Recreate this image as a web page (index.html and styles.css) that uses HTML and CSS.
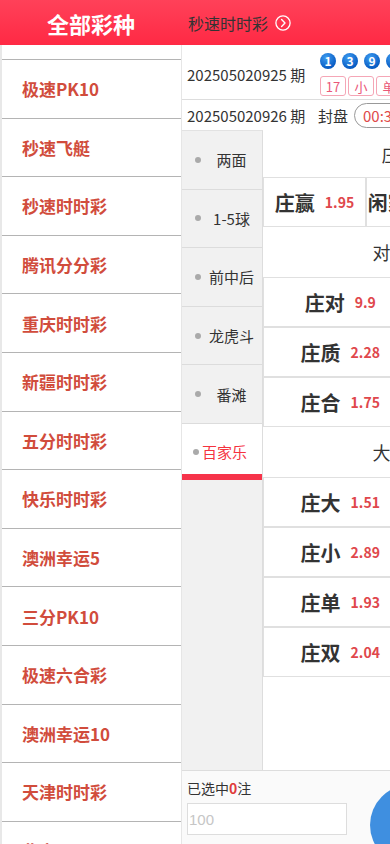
FILE: index.html
```html
<!DOCTYPE html>
<html lang="zh-CN">
<head>
<meta charset="utf-8">
<meta name="viewport" content="width=device-width, initial-scale=1">
<title>秒速时时彩</title>
<link rel="stylesheet" href="styles.css">
</head>
<body>
<div class="app">
  <aside class="drawer">
    <div class="drawer-head">全部彩种</div>
    <ul class="lot-list">
      <li class="lot lot-partial"></li>
      <li class="lot">极速PK10</li>
      <li class="lot">秒速飞艇</li>
      <li class="lot">秒速时时彩</li>
      <li class="lot">腾讯分分彩</li>
      <li class="lot">重庆时时彩</li>
      <li class="lot">新疆时时彩</li>
      <li class="lot">五分时时彩</li>
      <li class="lot">快乐时时彩</li>
      <li class="lot">澳洲幸运5</li>
      <li class="lot">三分PK10</li>
      <li class="lot">极速六合彩</li>
      <li class="lot">澳洲幸运10</li>
      <li class="lot">天津时时彩</li>
      <li class="lot">北京PK10</li>
    </ul>
  </aside>

  <main class="page">
    <header class="page-head">
      <span class="page-title">秒速时时彩</span>
      <svg class="head-icon" width="16" height="16" viewBox="0 0 16 16" aria-hidden="true">
        <circle cx="8" cy="8" r="7.1" fill="none" stroke="#fff" stroke-width="1.3"/>
        <path d="M6.6 4.6 L10 8 L6.6 11.4" fill="none" stroke="#fff" stroke-width="1.4" stroke-linecap="round" stroke-linejoin="round"/>
      </svg>
    </header>

    <div class="draw-row">
      <span class="period">202505020925 期</span>
      <div class="result">
        <div class="balls">
          <span class="ball">1</span>
          <span class="ball">3</span>
          <span class="ball">9</span>
          <span class="ball">0</span>
          <span class="ball">4</span>
        </div>
        <div class="tags">
          <span class="tag">17</span>
          <span class="tag">小</span>
          <span class="tag">单</span>
          <span class="tag">龙</span>
        </div>
      </div>
    </div>

    <div class="next-row">
      <span class="period">202505020926 期</span>
      <span class="seal">封盘</span>
      <span class="timer">00:35:12</span>
    </div>

    <div class="play">
      <nav class="tabs">
        <div class="tab"><span class="dot"></span><span class="tab-label">两面</span></div>
        <div class="tab"><span class="dot"></span><span class="tab-label">1-5球</span></div>
        <div class="tab"><span class="dot"></span><span class="tab-label">前中后</span></div>
        <div class="tab"><span class="dot"></span><span class="tab-label">龙虎斗</span></div>
        <div class="tab"><span class="dot"></span><span class="tab-label">番滩</span></div>
        <div class="tab tab-active"><span class="dot"></span><span class="tab-label">百家乐</span></div>
      </nav>

      <section class="board">
        <div class="group-title group-title-first">庄闲和局</div>
        <div class="grid-3">
          <div class="cell"><span class="cell-name">庄赢</span><span class="cell-odds">1.95</span></div>
          <div class="cell"><span class="cell-name">闲家赢</span><span class="cell-odds">1.95</span></div>
          <div class="cell"><span class="cell-name">和局</span><span class="cell-odds">8.00</span></div>
        </div>

        <div class="group-title">对子与质合</div>
        <div class="grid-2">
          <div class="cell"><span class="cell-name">庄对</span><span class="cell-odds">9.9</span></div>
          <div class="cell"><span class="cell-name">闲对</span><span class="cell-odds">9.9</span></div>
          <div class="cell"><span class="cell-name">庄质</span><span class="cell-odds">2.28</span></div>
          <div class="cell"><span class="cell-name">闲质</span><span class="cell-odds">2.28</span></div>
          <div class="cell"><span class="cell-name">庄合</span><span class="cell-odds">1.75</span></div>
          <div class="cell"><span class="cell-name">闲合</span><span class="cell-odds">1.75</span></div>
        </div>

        <div class="group-title">大小与单双</div>
        <div class="grid-2">
          <div class="cell"><span class="cell-name">庄大</span><span class="cell-odds">1.51</span></div>
          <div class="cell"><span class="cell-name">闲大</span><span class="cell-odds">1.51</span></div>
          <div class="cell"><span class="cell-name">庄小</span><span class="cell-odds">2.89</span></div>
          <div class="cell"><span class="cell-name">闲小</span><span class="cell-odds">2.89</span></div>
          <div class="cell"><span class="cell-name">庄单</span><span class="cell-odds">1.93</span></div>
          <div class="cell"><span class="cell-name">闲单</span><span class="cell-odds">1.93</span></div>
          <div class="cell"><span class="cell-name">庄双</span><span class="cell-odds">2.04</span></div>
          <div class="cell"><span class="cell-name">闲双</span><span class="cell-odds">2.04</span></div>
        </div>
      </section>
    </div>

    <footer class="betbar">
      <div class="bet-left">
        <div class="bet-count">已选中<b>0</b>注</div>
        <input class="bet-input" type="text" placeholder="100">
      </div>
      <button class="bet-btn" type="button">投注</button>
    </footer>
  </main>
</div>
</body>
</html>
```

FILE: styles.css
```css
* {
  box-sizing: border-box;
  margin: 0;
  padding: 0;
}

html, body {
  width: 390px;
  height: 844px;
  overflow: hidden;
  background: #fff;
}

body {
  font-family: "Noto Sans CJK SC", "Noto Sans", sans-serif;
  color: #333;
}

.app {
  display: flex;
  width: 390px;
  height: 844px;
  overflow: hidden;
}

/* ---------- drawer ---------- */
.drawer {
  flex: 0 0 182px;
  display: flex;
  flex-direction: column;
  background: #fff;
}

.drawer-head {
  flex: none;
  height: 45px;
  background: linear-gradient(180deg, #ff4159, #ff2944);
  color: #fff;
  font-size: 22px;
  font-weight: 700;
  display: flex;
  align-items: center;
  justify-content: center;
}

.lot-list {
  list-style: none;
  flex: 1;
  overflow: hidden;
  border-left: 2px solid #e8e8e8;
  border-right: 1px solid #e6e6e6;
}

.lot {
  height: 58.6px;
  border-bottom: 1px solid #b4b4b4;
  display: flex;
  align-items: center;
  padding-left: 20px;
  font-size: 17px;
  font-weight: 700;
  color: #d14c3c;
  white-space: nowrap;
}

.lot-partial {
  height: 15px;
}

/* ---------- page ---------- */
.page {
  flex: 0 0 390px;
  height: 844px;
  display: flex;
  flex-direction: column;
}

.page-head {
  flex: none;
  height: 45px;
  background: linear-gradient(180deg, #ff4159, #ff2944);
  display: flex;
  align-items: center;
  padding-left: 6px;
  gap: 7px;
}

.page-title {
  font-size: 16px;
  color: #333;
}

.head-icon {
  display: block;
}

.draw-row {
  flex: none;
  height: 55px;
  padding-top: 5px;
  padding-left: 5px;
  border-bottom: 1px solid #ddd;
  display: flex;
  align-items: center;
}

.period {
  flex: none;
  width: 131px;
  font-size: 15px;
  color: #333;
  white-space: nowrap;
}

.result {
  margin-left: 2px;
  display: flex;
  flex-direction: column;
  gap: 7px;
}

.balls {
  display: flex;
  gap: 6px;
}

.ball {
  width: 16px;
  height: 16px;
  border-radius: 50%;
  background: radial-gradient(circle at 40% 30%, #3e9df2, #0558c0 75%);
  color: #fff;
  font-size: 12px;
  font-weight: 700;
  line-height: 1;
  display: flex;
  align-items: center;
  justify-content: center;
}

.tags {
  display: flex;
  gap: 2px;
}

.tag {
  width: 26px;
  height: 20px;
  border: 1px solid #f5a6b6;
  border-radius: 3px;
  color: #ea5878;
  font-size: 13px;
  display: flex;
  align-items: center;
  justify-content: center;
}

.next-row {
  flex: none;
  height: 30px;
  padding-left: 5px;
  display: flex;
  align-items: center;
}

.seal {
  font-size: 15px;
  color: #333;
}

.timer {
  margin-left: 6px;
  height: 25px;
  padding: 0 8px;
  border: 1px solid #999;
  border-radius: 13px;
  color: #e04a4a;
  font-size: 15px;
  display: flex;
  align-items: center;
  white-space: nowrap;
}

/* ---------- play area ---------- */
.play {
  flex: 1;
  min-height: 0;
  display: flex;
}

.tabs {
  flex: none;
  width: 81px;
  background: #f1f1f1;
  border-right: 1px solid #ddd;
  border-top: 1px solid #e2e2e2;
}

.tab {
  height: 58.6px;
  border-bottom: 1px solid #dcdcdc;
  padding-left: 13px;
  display: flex;
  align-items: center;
  font-size: 15px;
  color: #333;
}

.dot {
  flex: none;
  width: 6px;
  height: 6px;
  border-radius: 50%;
  background: #aaa;
}

.tab-label {
  flex: 1;
  text-align: center;
  white-space: nowrap;
}

.tab-active {
  height: 56px;
  background: #fff;
  color: #f5333f;
  border-bottom: none;
  padding-left: 11px;
  box-shadow: inset 0 -6px 0 #f6334a;
}

.tab-active .tab-label {
  text-align: left;
  padding-left: 3px;
}

.board {
  flex: 1;
  min-width: 0;
  overflow: hidden;
  background: #fff;
}

.group-title {
  height: 50px;
  display: flex;
  align-items: center;
  justify-content: center;
  font-size: 18px;
  color: #333;
  white-space: nowrap;
}

.group-title-first {
  height: 47px;
}

.grid-3 {
  display: grid;
  grid-template-columns: repeat(3, 1fr);
}

.grid-2 {
  display: grid;
  grid-template-columns: repeat(2, 1fr);
}

.cell {
  height: 50px;
  border: 1px solid #e0e0e0;
  display: flex;
  align-items: center;
  justify-content: center;
  gap: 10px;
  white-space: nowrap;
}

.cell-name {
  font-size: 20px;
  font-weight: 700;
  color: #333;
}

.cell-odds {
  font-size: 14px;
  font-weight: 700;
  color: #e0474c;
}

/* ---------- bet bar ---------- */
.betbar {
  flex: none;
  height: 74px;
  background: #fafafa;
  border-top: 1px solid #ddd;
  padding-left: 5px;
  display: flex;
  overflow: hidden;
}

.bet-left {
  flex: none;
  width: 160px;
  padding-top: 7px;
  display: flex;
  flex-direction: column;
}

.bet-count {
  font-size: 14px;
  line-height: 20px;
  color: #333;
}

.bet-count b {
  color: #e03a3a;
}

.bet-input {
  margin-top: 5px;
  width: 160px;
  height: 32px;
  border: 1px solid #ddd;
  background: #fff;
  padding: 0 1px;
  font-family: "Liberation Sans", sans-serif;
  font-size: 15px;
  color: #333;
  outline: none;
}

.bet-input::placeholder {
  color: #c6c6c6;
}

.bet-btn {
  flex: none;
  width: 80px;
  height: 80px;
  margin-left: 23px;
  margin-top: 14px;
  border: none;
  border-radius: 50%;
  background: #3f8fe0;
  color: #fff;
  font-family: "Noto Sans CJK SC", sans-serif;
  font-size: 16px;
}
```
